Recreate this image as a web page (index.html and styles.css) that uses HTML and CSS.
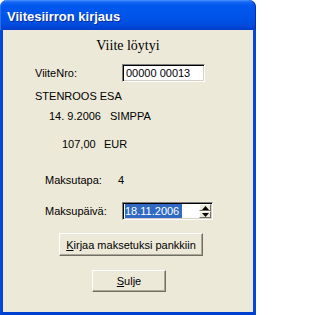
FILE: index.html
```
<!DOCTYPE html>
<html>
<head>
<meta charset="utf-8">
<link rel="stylesheet" href="styles.css">
</head>
<body>
<div class="window">
  <div class="titlebar"><span class="title">Viitesiirron kirjaus</span></div>
  <div class="content">
    <div class="heading">Viite löytyi</div>
    <div class="row row-viite">
      <span class="label lbl-viite">ViiteNro:</span>
      <span class="textbox">00000 00013</span>
    </div>
    <div class="line name">STENROOS ESA</div>
    <div class="line dateline"><span class="date">14. 9.2006</span><span>SIMPPA</span></div>
    <div class="line amount"><span class="sum">107,00</span><span>EUR</span></div>
    <div class="line method"><span class="mlabel">Maksutapa:</span><span>4</span></div>
    <div class="row row-date">
      <span class="label lbl-date">Maksupäivä:</span>
      <span class="datebox">
        <span class="sel">18.11.2006</span>
        <span class="spin">
          <span class="spinbtn"><svg width="7" height="4" viewBox="0 0 7 4"><path d="M3.5 0 L7 4 L0 4 Z" fill="#000"/></svg></span>
          <span class="spinbtn"><svg width="7" height="4" viewBox="0 0 7 4"><path d="M0 0 L7 0 L3.5 4 Z" fill="#000"/></svg></span>
        </span>
      </span>
    </div>
    <div class="btnrow btnrow1"><span class="button btn-kirjaa"><u>K</u>irjaa maksetuksi pankkiin</span></div>
    <div class="btnrow btnrow2"><span class="button btn-sulje"><u>S</u>ulje</span></div>
  </div>
</div>
</body>
</html>
```
FILE: styles.css
```
html, body {
  margin: 0;
  padding: 0;
  background: #ffffff;
}
.window {
  width: 256px;
  height: 315px;
  box-sizing: border-box;
  display: flex;
  flex-direction: column;
  font-family: "Liberation Sans", Arial, sans-serif;
  font-size: 11px;
  color: #000;
}
.titlebar {
  height: 30px;
  flex: none;
  border-radius: 7px 7px 0 0;
  background: linear-gradient(#4a94ff 0px, #1767f5 2px, #0058ee 5px, #0055ea 14px, #0050e4 22px, #0046d6 27px, #003cc8 30px);
  box-shadow: inset 1px 0 0 #2a6ff0, inset -1px 0 0 #0030b8;
  display: flex;
  align-items: flex-start;
}
.title {
  font-family: "Liberation Sans", Arial, sans-serif;
  font-weight: bold;
  font-size: 13px;
  color: #ffffff;
  margin: 9px 0 0 7px;
  line-height: 16px;
  text-shadow: 1px 1px 0 #0a2a9a;
}
.content {
  flex: 1;
  background: #ece9d8;
  border-left: 3px solid #0047dc;
  border-right: 3px solid #0047dc;
  border-bottom: 3px solid #0040d0;
  display: flex;
  flex-direction: column;
}
.heading {
  font-family: "Liberation Serif", "Times New Roman", serif;
  font-size: 14px;
  height: 20px;
  line-height: 20px;
  margin-top: 6px;
  text-align: center;
}
.row {
  display: flex;
  align-items: center;
}
.row-viite {
  margin-top: 8px;
  height: 18px;
}
.label {
  width: 87px;
  padding-left: 32px;
}
.textbox {
  width: 83px;
  height: 18px;
  box-sizing: border-box;
  background: #fff;
  border-top: 1px solid #808080;
  border-left: 1px solid #808080;
  border-right: 1px solid #ffffff;
  border-bottom: 1px solid #ffffff;
  box-shadow: inset 1px 1px 0 #000, inset -1px -1px 0 #d4d0c8;
  padding: 2px 0 0 3px;
  line-height: 13px;
}
.line {
  height: 14px;
  line-height: 14px;
  display: flex;
}
.name {
  margin-top: 7px;
  padding-left: 32px;
}
.dateline {
  margin-top: 6px;
  padding-left: 46px;
}
.date {
  width: 61px;
}
.amount {
  margin-top: 14px;
  padding-left: 59px;
}
.sum {
  width: 42px;
}
.method {
  margin-top: 22px;
  padding-left: 42px;
}
.mlabel {
  width: 73px;
}
.row-date {
  margin-top: 15px;
  height: 18px;
}
.lbl-date {
  padding-left: 42px;
  width: 77px;
}
.datebox {
  width: 91px;
  height: 18px;
  box-sizing: border-box;
  background: #fff;
  border-top: 1px solid #808080;
  border-left: 1px solid #808080;
  border-right: 1px solid #ffffff;
  border-bottom: 1px solid #ffffff;
  box-shadow: inset 1px 1px 0 #000, inset -1px -1px 0 #d4d0c8;
  display: flex;
  align-items: center;
  padding: 1px 1px 1px 2px;
}
.sel {
  background: #316ac5;
  color: #fff;
  height: 14px;
  line-height: 14px;
  width: 57px;
}
.spin {
  margin-left: auto;
  width: 12px;
  height: 14px;
  display: flex;
  flex-direction: column;
}
.spinbtn {
  flex: 1;
  background: #ece9d8;
  box-sizing: border-box;
  border-top: 1px solid #fff;
  border-left: 1px solid #fff;
  border-right: 1px solid #716f64;
  border-bottom: 1px solid #716f64;
  display: flex;
  align-items: center;
  justify-content: center;
}
.spinbtn svg {
  display: block;
}
.btnrow {
  display: flex;
}
.btnrow1 {
  margin-top: 13px;
  padding-left: 56px;
}
.btnrow2 {
  margin-top: 14px;
  padding-left: 89px;
}
.button {
  height: 23px;
  box-sizing: border-box;
  background: #ece9d8;
  border-top: 1px solid #ffffff;
  border-left: 1px solid #ffffff;
  border-right: 1px solid #716f64;
  border-bottom: 1px solid #716f64;
  box-shadow: inset -1px -1px 0 #aca899;
  display: flex;
  align-items: center;
  justify-content: center;
  line-height: 14px;
}
.btn-kirjaa {
  width: 144px;
}
.btn-sulje {
  width: 74px;
  height: 22px;
}
```
